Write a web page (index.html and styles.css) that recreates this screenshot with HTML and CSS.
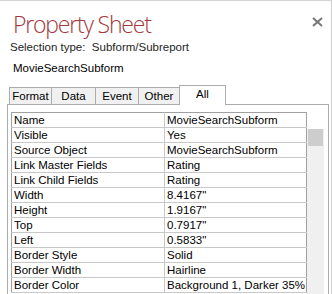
FILE: index.html
```html
<!DOCTYPE html>
<html lang="en">
<head>
<meta charset="UTF-8">
<title>Property Sheet</title>
<link rel="stylesheet" href="styles.css">
</head>
<body>

<!-- Property sheet panel -->
<div class="sheet">

  <div class="sheet-header">
    <h1 class="sheet-title">Property Sheet</h1>
    <span class="close">
      <svg width="11" height="10" viewBox="0 0 11 10"><path d="M1 1 L10 9 M10 1 L1 9" stroke="#777" stroke-width="2"/></svg>
    </span>
  </div>
  <div class="selection">Selection type:&nbsp;&nbsp;Subform/Subreport</div>
  <div class="object-name">MovieSearchSubform</div>

  <!-- Tabs -->
  <div class="tabs">
    <div class="tab tab-format">Format</div>
    <div class="tab tab-data">Data</div>
    <div class="tab tab-event">Event</div>
    <div class="tab tab-other">Other</div>
    <div class="tab tab-all active">All</div>
  </div>

  <div class="pane">
    <table class="props">
      <tr><td class="prop-name">Name</td><td>MovieSearchSubform</td></tr>
      <tr><td class="prop-name">Visible</td><td>Yes</td></tr>
      <tr><td class="prop-name">Source Object</td><td>MovieSearchSubform</td></tr>
      <tr><td class="prop-name">Link Master Fields</td><td>Rating</td></tr>
      <tr><td class="prop-name">Link Child Fields</td><td>Rating</td></tr>
      <tr><td class="prop-name">Width</td><td>8.4167"</td></tr>
      <tr><td class="prop-name">Height</td><td>1.9167"</td></tr>
      <tr><td class="prop-name">Top</td><td>0.7917"</td></tr>
      <tr><td class="prop-name">Left</td><td>0.5833"</td></tr>
      <tr><td class="prop-name">Border Style</td><td>Solid</td></tr>
      <tr><td class="prop-name">Border Width</td><td>Hairline</td></tr>
      <tr><td class="prop-name">Border Color</td><td>Background 1, Darker 35%</td></tr>
    </table>
    <div class="scrollbar">
      <div class="scroll-top"></div>
      <div class="scroll-thumb"></div>
    </div>
  </div>

</div>

</body>
</html>
```

FILE: styles.css
```css
/* Page */
body {
  margin: 0;
  font-family: "Liberation Sans", Arial, sans-serif;
  font-size: 11.5px;
  color: #000;
  background: #fff;
}

.sheet {
  width: 331px;
  height: 293px;
  border-top: 1px solid #d4d4d4;
  border-right: 1px solid #cfcfcf;
  overflow: hidden;
}

/* Header */
.sheet-header {
  display: flex;
  justify-content: space-between;
  align-items: flex-start;
  padding: 0 8px 0 13px;
}

.sheet-title {
  margin: 7px 0 0 0;
  font-family: "Open Sans", sans-serif;
  font-size: 23px;
  font-weight: 300;
  letter-spacing: -1.2px;
  line-height: 32px;
  color: #a4373a;
}

.close {
  margin-top: 16px;
}

.selection {
  padding-left: 10px;
  line-height: 16px;
  height: 16px;
  margin-top: -1px;
  color: #1e1e1e;
}

.object-name {
  padding-left: 13px;
  margin-top: 5px;
  line-height: 16px;
  height: 16px;
}

/* Tabs */
.tabs {
  display: flex;
  align-items: flex-end;
  margin-top: 7px;
  padding-left: 9px;
  height: 21px;
  position: relative;
  z-index: 1;
}

.tab {
  box-sizing: border-box;
  height: 17px;
  margin-right: -1px;
  border: 1px solid #acacac;
  border-bottom: none;
  background: #f0f0f0;
  text-align: center;
  line-height: 17px;
}

.tab-format { width: 43px; }
.tab-data { width: 45px; }
.tab-event { width: 44px; }
.tab-other { width: 42px; }
.tab-all { width: 47px; }

.tab.active {
  height: 20px;
  margin-bottom: -1px;
  background: #fff;
  line-height: 16px;
}

/* Pane with the property grid */
.pane {
  display: flex;
  align-items: flex-start;
  margin-left: 7px;
  width: 317px;
  height: 300px;
  border: 1px solid #acacac;
  padding: 7px 0 0 3px;
}

.props {
  width: 296px;
  border-collapse: collapse;
  border: 1px solid #a0a0a0;
  table-layout: fixed;
}

.props td {
  height: 14px;
  padding: 0 0 0 2px;
  border-bottom: 1px solid #c8c8c8;
  line-height: 14px;
  white-space: nowrap;
  overflow: hidden;
}

.prop-name {
  width: 150px;
  border-right: 1px solid #c8c8c8;
}

.scrollbar {
  width: 17px;
  height: 300px;
  background: #f0f0f0;
}

.scroll-top {
  height: 17px;
  background: #fff;
}

.scroll-thumb {
  margin-left: 1px;
  width: 15px;
  height: 17px;
  background: #cdcdcd;
}
```
